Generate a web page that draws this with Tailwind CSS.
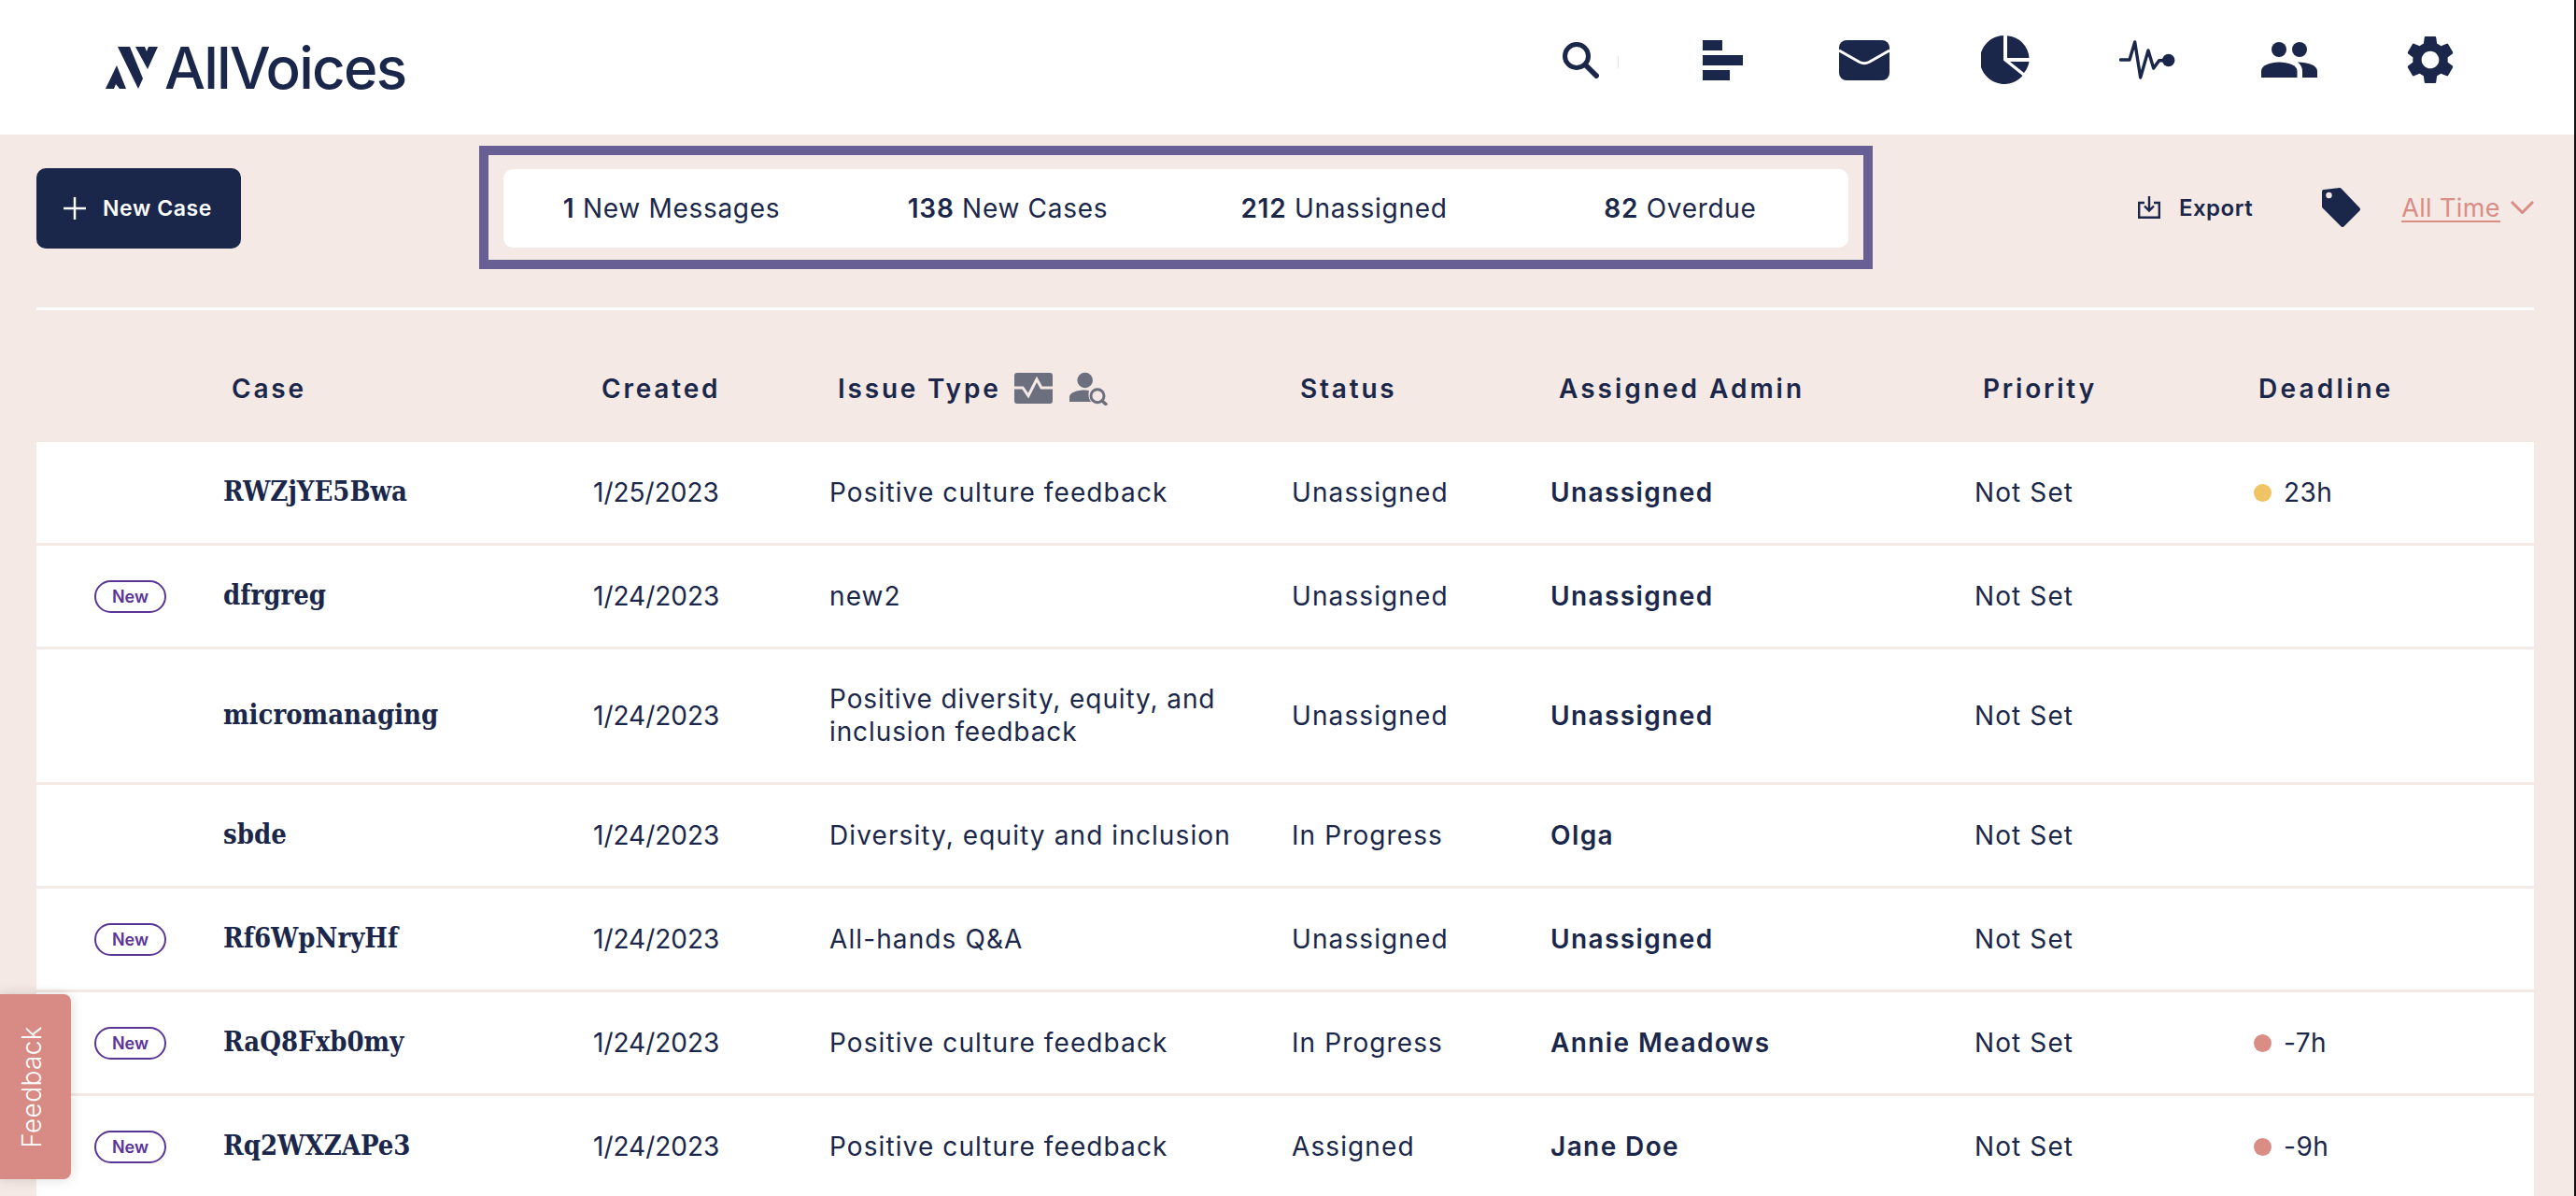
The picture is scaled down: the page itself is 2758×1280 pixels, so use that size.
<!DOCTYPE html>
<html lang="en">
<head>
  <meta charset="UTF-8">
  <title>AllVoices Cases</title>
  <script src="https://cdn.jsdelivr.net/npm/@tailwindcss/browser@4"></script>
</head>
<body class="relative flex h-screen overflow-hidden bg-white font-['Inter',sans-serif] text-[28px] tracking-[1.1px] text-[#1a274a]">

  <main class="min-w-0 flex-1 bg-[#f4e9e4]">
    <!-- top nav -->
    <header class="flex h-[144px] items-start justify-between bg-white">
      <div class="mt-[50px] ml-[113px] flex h-[45px] items-center gap-[7px]">
        <svg class="h-[45px] w-[56px]" viewBox="0 0 56 45" fill="#1a274a"><polygon points="13,0 26,0 40,34 35,45"/><polygon points="32,0 42,0 44,5 46,0 56,0 45,24"/><polygon points="0,45 12,20 22,45 15,45 11,40 9,45"/></svg>
        <span class="text-[62px] leading-none font-medium tracking-[-1.8px]">AllVoices</span>
      </div>
      <nav class="mr-[78px] grid h-[128px] w-[1061px] grid-cols-7 items-center justify-items-center">
        <div class="relative">
          <svg class="h-[39px] w-[39px]" viewBox="0 0 39 39" fill="none" stroke="#1a274a"><circle cx="15" cy="15" r="12.5" stroke-width="5"/><path d="M24 24l14 14" stroke-width="5.5"/></svg>
          <span class="absolute top-[15px] left-[59px] h-[13px] w-px bg-gray-200"></span>
        </div>
        <div class="flex w-[43px] flex-col gap-[5px]">
          <span class="h-[11px] w-[21px] bg-[#1a274a]"></span>
          <span class="h-[11px] w-[43px] bg-[#1a274a]"></span>
          <span class="h-[11px] w-[29px] bg-[#1a274a]"></span>
        </div>
        <svg class="h-[43px] w-[54px]" viewBox="0 0 54 43"><rect width="54" height="43" rx="8" fill="#1a274a"/><path d="M0 11l22 12.5q5 2.5 10 0L54 11" fill="none" stroke="#fff" stroke-width="3"/></svg>
        <svg class="h-[52px] w-[52px]" viewBox="0 0 52 52" fill="#1a274a"><path d="M24 0v26.5L44.5 43A26 26 0 1 1 24 0z"/><path d="M28 .3A25 25 0 0 1 51.5 24H28z"/><path d="M31 28h20.5a25 25 0 0 1-5.5 12z"/></svg>
        <svg class="h-[42px] w-[60px]" viewBox="0 0 60 42"><path d="M1.5 21H11L16.7 2l6 38L31 11l5.7 19 6-8.300H52" fill="none" stroke="#1a274a" stroke-width="3.400" stroke-linecap="round" stroke-linejoin="round"/><circle cx="52.7" cy="21.5" r="6.7" fill="#1a274a"/></svg>
        <svg class="h-[38px] w-[60px]" viewBox="0 0 60 38" fill="#1a274a"><circle cx="19" cy="8" r="8"/><circle cx="41" cy="8" r="8"/><path d="M0 38v-7c0-6 10-9.500 19-9.500 10 0 19.500 3.500 19.500 9.500v7z"/><path d="M39 21.500C50 21.500 60 25 60 31v7H44v-7c0-4-2-7-5-9.500z"/></svg>
        <svg class="h-[52px] w-[50px]" viewBox="2.500 2 19 20" fill="#1a274a"><path d="M19.140 12.940c.04-.3.06-.61.06-.94 0-.32-.02-.64-.07-.94l2.030-1.580c.18-.14.23-.41.12-.61l-1.920-3.320c-.12-.22-.37-.29-.59-.22l-2.390.96c-.5-.38-1.030-.7-1.620-.94l-.36-2.540c-.04-.24-.24-.41-.48-.41h-3.840c-.24 0-.43.17-.47.41l-.36 2.540c-.59.24-1.130.57-1.620.94l-2.390-.96c-.22-.08-.47 0-.59.22L2.740 8.870c-.12.21-.08.47.12.61l2.030 1.580c-.05.3-.09.63-.09.94s.02.64.07.94l-2.030 1.580c-.18.14-.23.41-.12.61l1.920 3.320c.12.22.37.29.59.22l2.390-.96c.5.38 1.030.7 1.620.94l.36 2.540c.05.24.24.41.48.41h3.840c.24 0 .44-.17.47-.41l.36-2.540c.59-.24 1.130-.56 1.620-.94l2.390.96c.22.08.47 0 .59-.22l1.920-3.320c.12-.22.07-.47-.12-.61l-2.010-1.580zM12 15.600c-1.980 0-3.600-1.620-3.600-3.600s1.620-3.600 3.600-3.600 3.600 1.620 3.600 3.600-1.620 3.600-3.600 3.600z"/></svg>
      </nav>
    </header>

    <!-- toolbar -->
    <section class="mr-[43px] ml-[39px] flex h-[188px] items-start border-b-[3px] border-white pt-[12px]">
      <button class="mt-[24px] flex h-[86px] w-[219px] items-center gap-[18px] rounded-[10px] bg-[#1a274a] pl-[29px] text-[23px] font-semibold tracking-[0.6px] text-white">
        <svg class="h-[24px] w-[24px]" viewBox="0 0 24 24" fill="none" stroke="#fff" stroke-width="2.500"><path d="M12 0v24M0 12h24"/></svg>
        New Case
      </button>
      <div class="ml-[255px] h-[132px] w-[1492px] border-[10px] border-[#686094] px-[16px] pt-[15px]">
        <div class="grid h-[84px] grid-cols-4 items-center rounded-[10px] bg-white text-center tracking-[0.7px]">
          <p><b class="font-semibold">1</b> New Messages</p>
          <p><b class="font-semibold">138</b> New Cases</p>
          <p><b class="font-semibold">212</b> Unassigned</p>
          <p><b class="font-semibold">82</b> Overdue</p>
        </div>
      </div>
      <div class="ml-auto flex h-[132px] items-center">
        <svg class="h-[24px] w-[24px]" viewBox="0 0 24 24" fill="none" stroke="#1a274a" stroke-width="2.400"><path d="M7 7H1.200v15.800h21.600V7H17"/><path d="M12 0v15M7 10.500l5 5 5-5"/></svg>
        <span class="mt-[2px] ml-[20px] text-[24px] font-semibold tracking-[0.5px]">Export</span>
        <svg class="ml-[74px] h-[42px] w-[41px]" viewBox="0 0 41 42" fill="#1a274a" stroke="#1a274a" stroke-width="4" stroke-linejoin="round"><polygon points="2,4 19,2 39,23 22,40 2,20"/><circle cx="7.500" cy="8" r="1.200" fill="#f4e9e4" stroke="#f4e9e4"/></svg>
        <a class="mt-[2px] ml-[44px] text-[27px] tracking-[0.4px] text-[#d98d85] underline decoration-2 underline-offset-4">All Time</a>
        <svg class="ml-[11px] h-[14px] w-[25px]" viewBox="0 0 25 14" fill="none" stroke="#d98d85" stroke-width="3"><path d="M1 1l11.500 11.500L24 1"/></svg>
      </div>
    </section>

    <!-- table head -->
    <div class="mr-[43px] ml-[39px] grid h-[141px] grid-cols-[200px_396px_253px_495px_277px_454px_299px_1fr] items-center pt-[26px] font-semibold tracking-[2.8px] [&>div]:pl-[9px]">
      <div></div>
      <div>Case</div>
      <div>Created</div>
      <div class="flex items-center">
        Issue Type
        <svg class="ml-[14px] h-[33px] w-[41px]" viewBox="0 0 41 33"><rect width="41" height="33" rx="3" fill="#6b6f7e"/><path d="M0 16h9l6 8.500L24 7l5 9h12" fill="none" stroke="#f4e9e4" stroke-width="3"/></svg>
        <svg class="ml-[18px] h-[36px] w-[42px]" viewBox="0 0 42 36"><circle cx="16.700" cy="9" r="8.300" fill="#6b6f7e"/><path d="M0 32v-5c0-5 8-7.500 17-7.500l4 .5c-1 4-1 8 2 12z" fill="#6b6f7e"/><circle cx="30" cy="25.700" r="7" fill="none" stroke="#6b6f7e" stroke-width="3"/><path d="M35 31l5 4.500" stroke="#6b6f7e" stroke-width="3.500"/></svg>
      </div>
      <div>Status</div>
      <div class="tracking-[3px]">Assigned Admin</div>
      <div>Priority</div>
      <div class="!pl-[5px] tracking-[3.200px]">Deadline</div>
    </div>

    <!-- table rows -->
    <div class="mr-[43px] ml-[39px] bg-white [&>div]:grid [&>div]:grid-cols-[200px_396px_253px_495px_277px_454px_299px_1fr] [&>div]:items-center [&>div]:border-b-[3px] [&>div]:border-[#f4e9e4]">
      <div class="h-[111px]">
        <span></span>
        <b class="font-['DejaVu_Serif',serif] text-[29px] font-bold tracking-normal [font-stretch:condensed]">RWZjYE5Bwa</b>
        <span class="tracking-normal">1/25/2023</span>
        <span>Positive culture feedback</span>
        <span>Unassigned</span>
        <b class="font-semibold tracking-[1.4px]">Unassigned</b>
        <span>Not Set</span>
        <span class="flex items-center gap-[13px] tracking-[0.5px]"><i class="h-[19px] w-[19px] rounded-full bg-[#f0c464]"></i>23h</span>
      </div>
      <div class="h-[111px]">
        <span class="ml-[62px] flex h-[35px] w-[77px] items-center justify-center rounded-full border-2 border-[#5b3596] text-[18px] font-semibold tracking-normal text-[#5b3596]">New</span>
        <b class="font-['DejaVu_Serif',serif] text-[29px] font-bold tracking-normal [font-stretch:condensed]">dfrgreg</b>
        <span class="tracking-normal">1/24/2023</span>
        <span>new2</span>
        <span>Unassigned</span>
        <b class="font-semibold tracking-[1.4px]">Unassigned</b>
        <span>Not Set</span>
        <span></span>
      </div>
      <div class="h-[145px]">
        <span></span>
        <b class="font-['DejaVu_Serif',serif] text-[29px] font-bold tracking-normal [font-stretch:condensed]">micromanaging</b>
        <span class="tracking-normal">1/24/2023</span>
        <span class="leading-[35px] tracking-[0.9px]">Positive diversity, equity, and<br>inclusion feedback</span>
        <span>Unassigned</span>
        <b class="font-semibold tracking-[1.4px]">Unassigned</b>
        <span>Not Set</span>
        <span></span>
      </div>
      <div class="h-[111px]">
        <span></span>
        <b class="font-['DejaVu_Serif',serif] text-[29px] font-bold tracking-normal [font-stretch:condensed]">sbde</b>
        <span class="tracking-normal">1/24/2023</span>
        <span>Diversity, equity and inclusion</span>
        <span>In Progress</span>
        <b class="font-semibold tracking-[1.4px]">Olga</b>
        <span>Not Set</span>
        <span></span>
      </div>
      <div class="h-[111px]">
        <span class="ml-[62px] flex h-[35px] w-[77px] items-center justify-center rounded-full border-2 border-[#5b3596] text-[18px] font-semibold tracking-normal text-[#5b3596]">New</span>
        <b class="font-['DejaVu_Serif',serif] text-[29px] font-bold tracking-normal [font-stretch:condensed]">Rf6WpNryHf</b>
        <span class="tracking-normal">1/24/2023</span>
        <span>All-hands Q&amp;A</span>
        <span>Unassigned</span>
        <b class="font-semibold tracking-[1.4px]">Unassigned</b>
        <span>Not Set</span>
        <span></span>
      </div>
      <div class="h-[111px]">
        <span class="ml-[62px] flex h-[35px] w-[77px] items-center justify-center rounded-full border-2 border-[#5b3596] text-[18px] font-semibold tracking-normal text-[#5b3596]">New</span>
        <b class="font-['DejaVu_Serif',serif] text-[29px] font-bold tracking-normal [font-stretch:condensed]">RaQ8Fxb0my</b>
        <span class="tracking-normal">1/24/2023</span>
        <span>Positive culture feedback</span>
        <span>In Progress</span>
        <b class="font-semibold tracking-[1.4px]">Annie Meadows</b>
        <span>Not Set</span>
        <span class="flex items-center gap-[13px] tracking-[0.5px]"><i class="h-[19px] w-[19px] rounded-full bg-[#d98d85]"></i>-7h</span>
      </div>
      <div class="h-[111px]">
        <span class="ml-[62px] flex h-[35px] w-[77px] items-center justify-center rounded-full border-2 border-[#5b3596] text-[18px] font-semibold tracking-normal text-[#5b3596]">New</span>
        <b class="font-['DejaVu_Serif',serif] text-[29px] font-bold tracking-normal [font-stretch:condensed]">Rq2WXZAPe3</b>
        <span class="tracking-normal">1/24/2023</span>
        <span>Positive culture feedback</span>
        <span>Assigned</span>
        <b class="font-semibold tracking-[1.4px]">Jane Doe</b>
        <span>Not Set</span>
        <span class="flex items-center gap-[13px] tracking-[0.5px]"><i class="h-[19px] w-[19px] rounded-full bg-[#d98d85]"></i>-9h</span>
      </div>
    </div>
  </main>

  <aside class="w-[2px] shrink-0 bg-[#111]"></aside>

  <!-- feedback tab floats over the table -->
  <button class="absolute top-[1064px] left-0 flex h-[198px] w-[76px] items-center justify-center rounded-r-[8px] bg-[#d88b84] pr-[8px] tracking-[0.4px] text-white shadow-[0_0_14px_rgba(0,0,0,0.15)]">
    <span class="rotate-180 font-light [writing-mode:vertical-rl]">Feedback</span>
  </button>
</body>
</html>
